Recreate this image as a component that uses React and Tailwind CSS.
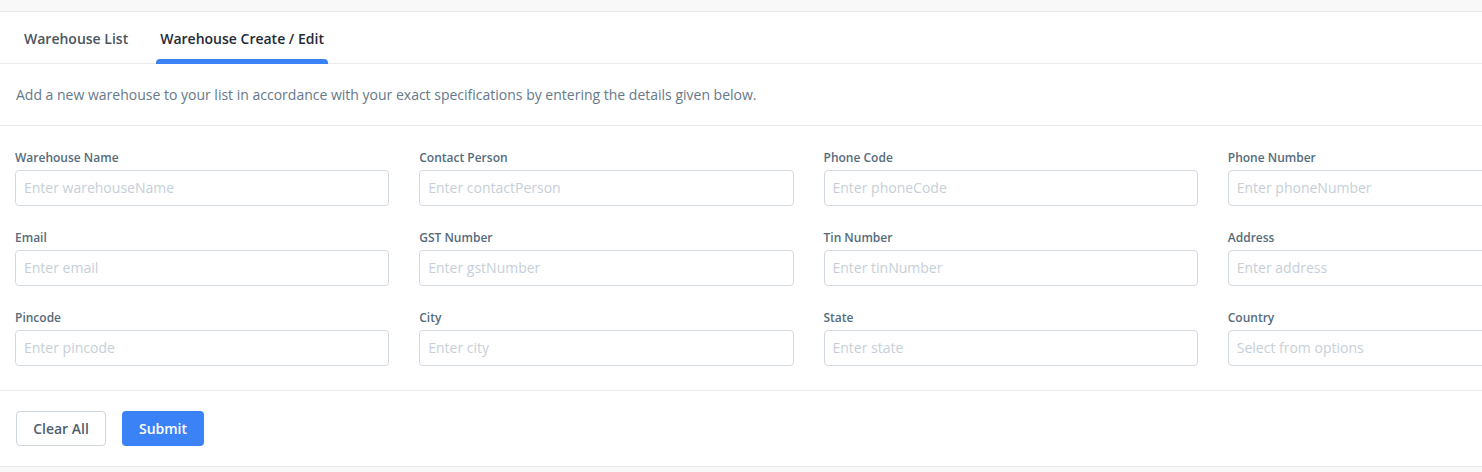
export default function App() {
  const fields = [
    ["Warehouse Name", "Enter warehouseName"],
    ["Contact Person", "Enter contactPerson"],
    ["Phone Code", "Enter phoneCode"],
    ["Phone Number", "Enter phoneNumber"],
    ["Email", "Enter email"],
    ["GST Number", "Enter gstNumber"],
    ["Tin Number", "Enter tinNumber"],
    ["Address", "Enter address"],
    ["Pincode", "Enter pincode"],
    ["City", "Enter city"],
    ["State", "Enter state"],
    ["Country", "Select from options"],
  ];
  return (
    <div
      className="w-[1482px] h-[472px] overflow-hidden bg-[#f8f8f8]"
      style={{ fontFamily: '"Open Sans", "Liberation Sans", sans-serif' }}
    >
      <div className="h-[12px] border-b border-[#e8e8e8]" />
      <div className="w-[1617px] bg-white border-b border-[#e8e8e8]">
        <div className="flex h-[52px] border-b border-[#ebebeb] pl-[12px] pt-[2px]">
          <div className="px-[12px] flex items-center text-[14px] font-semibold text-[#4a5562]">
            Warehouse List
          </div>
          <div className="relative ml-[16px] px-[4px] flex items-center text-[14px] font-semibold text-[#1f2a37]">
            Warehouse Create / Edit
            <div className="absolute left-0 right-0 bottom-[-1px] h-[5px] rounded-t-[4px] bg-[#3b82f6]" />
          </div>
        </div>
        <div className="h-[62px] flex items-center px-[16px] border-b border-[#ebebeb] text-[14px] text-[#66788a]">
          Add a new warehouse to your list in accordance with your exact specifications by entering the details given below.
        </div>
        <div className="grid grid-cols-4 gap-x-[30px] gap-y-[23px] px-[15px] pt-[23px] pb-[24px] border-b border-[#ebebeb]">
          {fields.map(([label, ph]) => (
            <div key={label} className="flex flex-col">
              <label className="text-[12px] font-semibold text-[#566b7c] leading-[18px] mb-[3px]">{label}</label>
              <div className="h-[36px] border border-[#d2d9e0] rounded-[4px] flex items-center px-[8px] pb-[2px] text-[14px] text-[#c6cfd8]">
                {ph}
              </div>
            </div>
          ))}
        </div>
        <div className="flex items-center gap-[16px] px-[16px] h-[75px]">
          <button className="h-[35px] w-[90px] border border-[#cdd5dd] rounded-[4px] text-[14px] font-semibold text-[#4f5f6f] bg-white">
            Clear All
          </button>
          <button className="h-[35px] w-[82px] rounded-[4px] text-[14px] font-semibold text-white bg-[#3b82f6]">
            Submit
          </button>
        </div>
      </div>
    </div>
  );
}
